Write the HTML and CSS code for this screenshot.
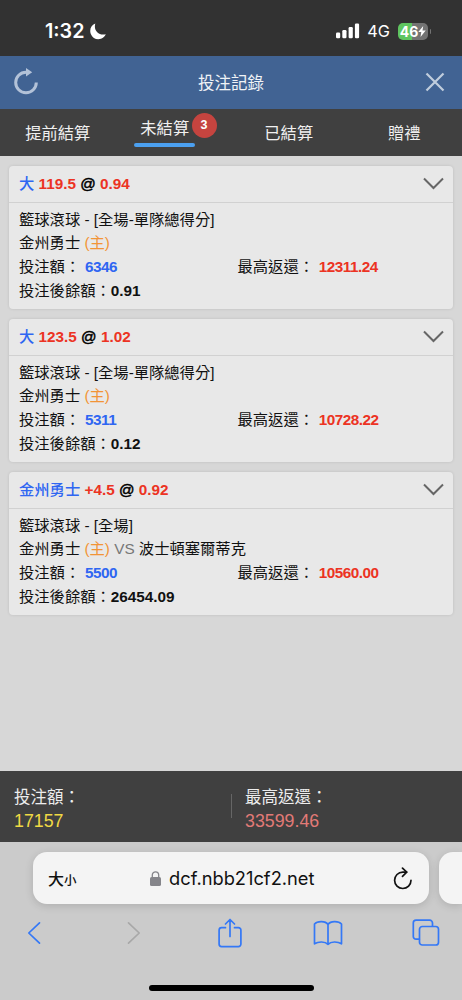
FILE: index.html
```html
<!DOCTYPE html>
<html lang="zh-Hant">
<head>
    <meta charset="UTF-8">
    <meta name="viewport" content="width=device-width, initial-scale=1.0">
    <title>投注記錄</title>
    <link rel="stylesheet" href="styles.css">
</head>
<body>
    <div class="status-bar">
        <div class="clock">
            <span>1:32</span>
            <svg width="16" height="17" viewBox="0 0 16 17"><path d="M5.300.6C.8 2.300-.7 7 .8 11c1.700 4.600 6.400 6.200 10.200 4.800 2.200-.8 3.900-2.400 4.800-4.600C9 13 3.200 7.500 5.300.6z" fill="#fff"/></svg>
        </div>
        <div class="indicators">
            <svg width="24" height="16" viewBox="0 0 24 16" fill="#fff">
                <rect x="0" y="9.500" width="4.200" height="5.800" rx="1.200"/>
                <rect x="6.300" y="7" width="4.200" height="8.300" rx="1.200"/>
                <rect x="12.600" y="4" width="4.200" height="11.300" rx="1.200"/>
                <rect x="18.900" y="0.500" width="4.200" height="14.800" rx="1.200"/>
            </svg>
            <span class="network">4G</span>
            <div class="battery">
                <span>46</span>
                <svg width="8" height="11" viewBox="0 0 8 11"><path d="M5.200 0L.3 6.100h3L2.500 11l5.200-6.500H4.500z" fill="#fff"/></svg>
            </div>
        </div>
    </div>

    <header class="header">
        <svg width="26" height="28" viewBox="0 0 26 28">
            <path d="M23.300 14.500A10.300 10.300 0 1 1 13 4.200h2" fill="none" stroke="#b3c2d8" stroke-width="3"/>
            <path d="M13 0l6.200 4.300L13 8.600z" fill="#b3c2d8"/>
        </svg>
        <h1>投注記錄</h1>
        <svg class="close" width="20" height="20" viewBox="0 0 20 20"><path d="M1.500 1.500l17 17M18.500 1.500l-17 17" stroke="#c0cddd" stroke-width="2.200" fill="none"/></svg>
    </header>

    <nav class="tabs">
        <div class="tab">提前結算</div>
        <div class="tab active"><span class="tab-label">未結算</span><span class="badge">3</span></div>
        <div class="tab">已結算</div>
        <div class="tab">贈禮</div>
    </nav>

    <main class="bets">
        <section class="card">
            <div class="card-head">
                <div><span class="blue">大</span> <span class="red">119.5</span> <span class="at">@</span> <span class="red">0.94</span></div>
                <svg class="chevron" width="21" height="13" viewBox="0 0 21 13"><path d="M1 1.500l9.500 9.500L20 1.500"/></svg>
            </div>
            <div class="card-body">
                <p>籃球滾球 - [全場-單隊總得分]</p>
                <p>金州勇士 <span class="orange">(主)</span></p>
                <div class="amounts">
                    <p>投注額： <span class="blue">6346</span></p>
                    <p>最高返還： <span class="red">12311.24</span></p>
                </div>
                <p>投注後餘額：<b>0.91</b></p>
            </div>
        </section>

        <section class="card">
            <div class="card-head">
                <div><span class="blue">大</span> <span class="red">123.5</span> <span class="at">@</span> <span class="red">1.02</span></div>
                <svg class="chevron" width="21" height="13" viewBox="0 0 21 13"><path d="M1 1.500l9.500 9.500L20 1.500"/></svg>
            </div>
            <div class="card-body">
                <p>籃球滾球 - [全場-單隊總得分]</p>
                <p>金州勇士 <span class="orange">(主)</span></p>
                <div class="amounts">
                    <p>投注額： <span class="blue">5311</span></p>
                    <p>最高返還： <span class="red">10728.22</span></p>
                </div>
                <p>投注後餘額：<b>0.12</b></p>
            </div>
        </section>

        <section class="card">
            <div class="card-head">
                <div><span class="blue">金州勇士</span> <span class="red">+4.5</span> <span class="at">@</span> <span class="red">0.92</span></div>
                <svg class="chevron" width="21" height="13" viewBox="0 0 21 13"><path d="M1 1.500l9.500 9.500L20 1.500"/></svg>
            </div>
            <div class="card-body">
                <p>籃球滾球 - [全場]</p>
                <p>金州勇士 <span class="orange">(主)</span> <span class="vs">VS</span> 波士頓塞爾蒂克</p>
                <div class="amounts">
                    <p>投注額： <span class="blue">5500</span></p>
                    <p>最高返還： <span class="red">10560.00</span></p>
                </div>
                <p>投注後餘額：<b>26454.09</b></p>
            </div>
        </section>
    </main>

    <div class="totals">
        <div class="total">
            <p>投注額：</p>
            <p class="stake">17157</p>
        </div>
        <div class="total">
            <p>最高返還：</p>
            <p class="payout">33599.46</p>
        </div>
    </div>

    <footer class="browser">
        <div class="address-row">
            <div class="address">
                <span class="text-size">大<small>小</small></span>
                <div class="url">
                    <svg width="11" height="15" viewBox="0 0 11 15">
                        <rect x="0" y="6" width="11" height="9" rx="1.600" fill="#85858a"/>
                        <path d="M2.300 6.500V4a3.200 3.200 0 0 1 6.400 0v2.500" fill="none" stroke="#85858a" stroke-width="1.300"/>
                    </svg>
                    <span>dcf.nbb21cf2.net</span>
                </div>
                <svg width="20" height="23" viewBox="0 0 20 23" fill="none" stroke="#111" stroke-width="1.700" stroke-linecap="round" stroke-linejoin="round">
                    <path d="M18 13.300A8.200 8.200 0 1 1 9.800 5.100h3.800"/>
                    <path d="M9.500 1.200l4.200 4-4.200 4.100"/>
                </svg>
            </div>
            <div class="next-tab"></div>
        </div>
        <div class="toolbar">
            <svg width="14" height="24" viewBox="0 0 14 24"><path d="M12.500 1.800L1.800 12l10.700 10.200"/></svg>
            <svg class="disabled" width="14" height="24" viewBox="0 0 14 24"><path d="M3.500 1.800L14.200 12 3.500 22.200"/></svg>
            <svg width="26" height="30" viewBox="0 0 26 30"><path d="M8.500 9.700H4.600a2.500 2.500 0 0 0-2.500 2.500v13.900a2.500 2.500 0 0 0 2.500 2.500h16.800a2.500 2.500 0 0 0 2.500-2.500V12.200a2.500 2.500 0 0 0-2.500-2.500h-3.900M13 18.500V1.800M8.500 6L13 1.500 17.500 6"/></svg>
            <svg width="30" height="26" viewBox="0 0 30 26"><path d="M15 4.500C12.500.8 4.500.8 1.500 4v19.800c4-2.500 10.500-2.500 13.500.5 3-3 9.500-3 13.500-.5V4C25.500.8 17.500.8 15 4.500zM15 4.500v19.800"/></svg>
            <svg width="28" height="28" viewBox="0 0 28 28"><rect x="7.500" y="7.500" width="19" height="18.500" rx="2.800"/><path d="M20.500 7.200V4a2.800 2.800 0 0 0-2.800-2.800H4.100A2.800 2.800 0 0 0 1.300 4v13.400a2.800 2.800 0 0 0 2.800 2.800h3.200"/></svg>
        </div>
        <div class="home-indicator"></div>
    </footer>
</body>
</html>
```
FILE: styles.css
```css
:root {
    --blue: #2f66f2;
    --red: #ec3323;
    --orange: #f29436;
    --dark: #404040;
    --ios-blue: #3478f6;
}

* {
    margin: 0;
    padding: 0;
    box-sizing: border-box;
}

body {
    width: 462px;
    height: 1000px;
    display: flex;
    flex-direction: column;
    overflow: hidden;
    background: #d7d7d7;
    color: #111;
    font-family: "Liberation Sans", "Noto Sans CJK TC", sans-serif;
    font-size: 15.3px;
}

svg {
    display: block;
    flex-shrink: 0;
}

.status-bar {
    height: 56px;
    flex-shrink: 0;
    padding: 6px 34px 0 45px;
    background: #323232;
    color: #fff;
    display: flex;
    justify-content: space-between;
    align-items: center;
    font-family: Inter, "Liberation Sans", sans-serif;
}

.clock {
    display: flex;
    align-items: center;
    gap: 6px;
    font-size: 19.7px;
    font-weight: 600;
}

.indicators {
    display: flex;
    align-items: center;
}

.network {
    margin: 0 8px 0 7px;
    font-size: 16.3px;
}

.battery {
    position: relative;
    width: 30px;
    height: 17px;
    border-radius: 5px;
    background: linear-gradient(90deg, #5fc55f 47%, #737373 47%);
    display: flex;
    align-items: center;
    justify-content: center;
    font-size: 14px;
    font-weight: 700;
}

.battery::after {
    content: '';
    position: absolute;
    right: -3px;
    top: 6px;
    width: 1.5px;
    height: 5px;
    border-radius: 0 2px 2px 0;
    background: #737373;
}

.header {
    height: 53px;
    flex-shrink: 0;
    padding: 0 17px 2px 13px;
    background: #416393;
    display: flex;
    justify-content: space-between;
    align-items: center;
}

.header h1 {
    padding-right: 2px;
    color: #f0f3f7;
    font-size: 16.5px;
    font-weight: 400;
}

.tabs {
    height: 47px;
    flex-shrink: 0;
    background: var(--dark);
    color: #f0f0f0;
    display: grid;
    grid-template-columns: repeat(4, 1fr);
    font-size: 16.3px;
}

.tab {
    padding-bottom: 2px;
    display: flex;
    align-items: center;
    justify-content: center;
}

.tab.active {
    position: relative;
    align-items: flex-start;
    padding: 7px 17px 0 0;
}

.tab-label {
    display: flex;
    flex-direction: column;
    gap: 2px;
    padding: 0 6px;
    line-height: 25px;
}

.tab-label::after {
    content: '';
    height: 3.5px;
    margin: 0 -6px;
    border-radius: 2px;
    background: #4ba0f0;
}

.badge {
    position: absolute;
    left: 76px;
    top: 4px;
    width: 25px;
    height: 25px;
    border-radius: 50%;
    background: #c5443f;
    color: #fff;
    font-size: 12.5px;
    font-weight: 700;
    line-height: 25px;
    text-align: center;
}

.bets {
    flex: 1;
    padding: 10px 9.5px 0 9px;
    display: flex;
    flex-direction: column;
    gap: 10px;
}

.card {
    height: 143px;
    border-radius: 4px;
    background: #e8e8e8;
    box-shadow: 0 0 3px rgba(0, 0, 0, 0.12);
}

.card-head {
    height: 36.5px;
    padding: 0 9px 0 10px;
    border-bottom: 1.5px solid #d1d1d1;
    display: flex;
    justify-content: space-between;
    align-items: center;
    line-height: 24px;
}

.card-head .blue {
    font-weight: 500;
}

.at {
    color: #000;
    -webkit-text-stroke: 0.5px #000;
}

.chevron {
    fill: none;
    stroke: #666;
    stroke-width: 2;
}

.card-body {
    padding: 5px 10px 0;
    line-height: 23.7px;
}

.amounts {
    display: grid;
    grid-template-columns: 218.5px 1fr;
}

.amounts span {
    margin-left: 0.5px;
    letter-spacing: -0.5px;
}

.blue {
    color: var(--blue);
    font-weight: 700;
}

.red {
    color: var(--red);
    font-weight: 700;
}

.orange {
    color: var(--orange);
}

.vs {
    color: #777;
}

.totals {
    height: 71px;
    flex-shrink: 0;
    background: var(--dark);
    color: #ededed;
    display: grid;
    grid-template-columns: 1fr 1fr;
    align-items: center;
    font-size: 16.5px;
    line-height: 24px;
}

.total {
    padding: 4px 0 0 14px;
}

.total + .total {
    position: relative;
}

.total + .total::before {
    content: '';
    position: absolute;
    left: 0;
    top: 13px;
    width: 1px;
    height: 24px;
    background: #666;
}

.stake,
.payout {
    font-size: 17.8px;
}

.stake {
    color: #f0d944;
}

.payout {
    color: #e27a77;
}

.browser {
    height: 158px;
    flex-shrink: 0;
    background: #cbcbcb;
    display: flex;
    flex-direction: column;
}

.address-row {
    padding: 10px 0 0 33px;
    display: flex;
    gap: 10px;
}

.address,
.next-tab {
    height: 52px;
    background: #f4f4f4;
    box-shadow: 0 2px 9px rgba(0, 0, 0, 0.14);
}

.address {
    width: 396px;
    flex-shrink: 0;
    padding: 0 16px 0 15px;
    border-radius: 14px;
    display: flex;
    align-items: center;
    justify-content: space-between;
}

.text-size {
    font-weight: 500;
    font-size: 16px;
}

.text-size small {
    font-size: 12.5px;
}

.url {
    padding-right: 5px;
    display: flex;
    align-items: center;
    gap: 8px;
    font-family: Inter, "Liberation Sans", sans-serif;
    font-size: 18.3px;
}

.next-tab {
    flex: 1;
    border-radius: 14px 0 0 14px;
}

.toolbar {
    height: 58px;
    padding: 0 21px 0 19px;
    display: flex;
    align-items: center;
    justify-content: space-between;
}

.toolbar svg {
    width: 30px;
    overflow: visible;
    fill: none;
    stroke: var(--ios-blue);
    stroke-width: 1.7;
    stroke-linecap: round;
    stroke-linejoin: round;
}

.toolbar .disabled {
    stroke: #a8a8a8;
}

.home-indicator {
    width: 165px;
    height: 6px;
    margin: 23px auto 0;
    border-radius: 3px;
    background: #000;
}
```
